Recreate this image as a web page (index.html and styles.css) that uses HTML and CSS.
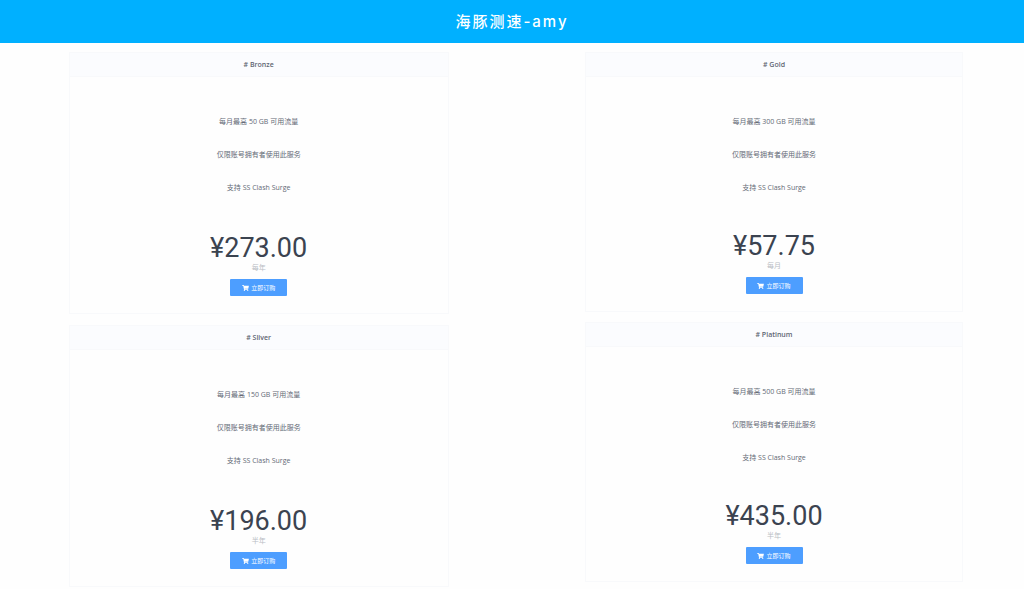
FILE: index.html
```html
<!DOCTYPE html>
<html lang="zh-CN">

<head>
	<meta charset="utf-8">
	<meta name="viewport" content="width=device-width, initial-scale=1">
	<title>海豚测速-amy</title>
	<link rel="stylesheet" href="styles.css">
</head>

<body>

	<svg class="sprite" aria-hidden="true">
		<symbol id="cart" viewBox="0 0 576 512">
			<path d="M528.12 301.319l47.273-208C578.806 78.301 567.391 64 551.99 64H159.208l-9.166-44.81C147.758 8.021 137.93 0 126.529 0H24C10.745 0 0 10.745 0 24v16c0 13.255 10.745 24 24 24h69.883l70.248 343.435C147.325 417.1 136 435.222 136 456c0 30.928 25.072 56 56 56s56-25.072 56-56c0-15.674-6.447-29.835-16.824-40h209.647C430.447 426.165 424 440.326 424 456c0 30.928 25.072 56 56 56s56-25.072 56-56c0-22.172-12.888-41.332-31.579-50.405l5.517-24.276c3.413-15.018-8.002-29.319-23.403-29.319H218.117l-6.545-32h293.145c11.206 0 20.92-7.754 23.403-18.681z"/>
		</symbol>
	</svg>

	<header class="topbar">
		<h1>海豚测速-amy</h1>
	</header>

	<main class="plans">
		<div class="column column-left">
			<section class="plan">
				<h2># Bronze</h2>
				<div class="features">
					<p>每月最高 50 GB 可用流量</p>
					<p>仅限账号拥有者使用此服务</p>
					<p>支持 SS Clash Surge</p>
				</div>
				<div class="price">¥273.00</div>
				<div class="period">每年</div>
				<button type="button" class="order"><svg class="icon"><use href="#cart"/></svg>立即订购</button>
			</section>
			<section class="plan">
				<h2># Sliver</h2>
				<div class="features">
					<p>每月最高 150 GB 可用流量</p>
					<p>仅限账号拥有者使用此服务</p>
					<p>支持 SS Clash Surge</p>
				</div>
				<div class="price">¥196.00</div>
				<div class="period">半年</div>
				<button type="button" class="order"><svg class="icon"><use href="#cart"/></svg>立即订购</button>
			</section>
		</div>

		<div class="column">
			<section class="plan">
				<h2># Gold</h2>
				<div class="features">
					<p>每月最高 300 GB 可用流量</p>
					<p>仅限账号拥有者使用此服务</p>
					<p>支持 SS Clash Surge</p>
				</div>
				<div class="price">¥57.75</div>
				<div class="period">每月</div>
				<button type="button" class="order"><svg class="icon"><use href="#cart"/></svg>立即订购</button>
			</section>
			<section class="plan">
				<h2># Platinum</h2>
				<div class="features">
					<p>每月最高 500 GB 可用流量</p>
					<p>仅限账号拥有者使用此服务</p>
					<p>支持 SS Clash Surge</p>
				</div>
				<div class="price">¥435.00</div>
				<div class="period">半年</div>
				<button type="button" class="order"><svg class="icon"><use href="#cart"/></svg>立即订购</button>
			</section>
		</div>
	</main>

</body>
</html>
```
FILE: styles.css
```css
* {
	box-sizing: border-box;
}

body {
	margin: 0;
	background: #fefefe;
	color: #646a76;
	font-family: "Open Sans", "Noto Sans CJK SC", sans-serif;
	font-size: 7px;
}

h1,
h2,
p {
	margin: 0;
}

.sprite {
	display: none;
}

.topbar {
	background: #00b0ff;
	color: #fff;
	text-align: center;
}

.topbar h1 {
	font-family: Inter, "Noto Sans CJK SC", sans-serif;
	font-size: 15px;
	font-weight: 500;
	letter-spacing: 2px;
	line-height: 43px;
}

.plans {
	display: grid;
	grid-template-columns: 380fr 377fr;
	gap: 15.3%;
	padding: 9px 6% 0 6.7%;
}

.column {
	display: flex;
	flex-direction: column;
	gap: 10px;
}

.plan {
	border: 1px solid #f8f9fb;
	padding-bottom: 17px;
	text-align: center;
}

.plan h2 {
	background: #fbfcfe;
	border-bottom: 1px solid #f8f9fb;
	color: #5f6672;
	font-size: 7px;
	font-weight: 600;
	line-height: 23px;
}

.features {
	padding: 28px 0 26px;
	line-height: 33px;
}

.price {
	color: #3b4350;
	font-family: Roboto, sans-serif;
	font-size: 27px;
	line-height: 32px;
}

.period {
	color: #b9bdc4;
	line-height: 8px;
}

.order {
	display: flex;
	align-items: center;
	justify-content: center;
	gap: 2px;
	width: 57px;
	height: 17px;
	margin: 7px auto 0;
	padding: 0;
	border: 0;
	border-radius: 1px;
	background: #4d9eff;
	color: #fff;
	font-family: inherit;
	font-size: 6px;
	cursor: pointer;
}

.icon {
	width: 7px;
	height: 6px;
	fill: currentColor;
}

.column-left {
	gap: 11px;
}

.column-left .features {
	padding-bottom: 28px;
}
```
